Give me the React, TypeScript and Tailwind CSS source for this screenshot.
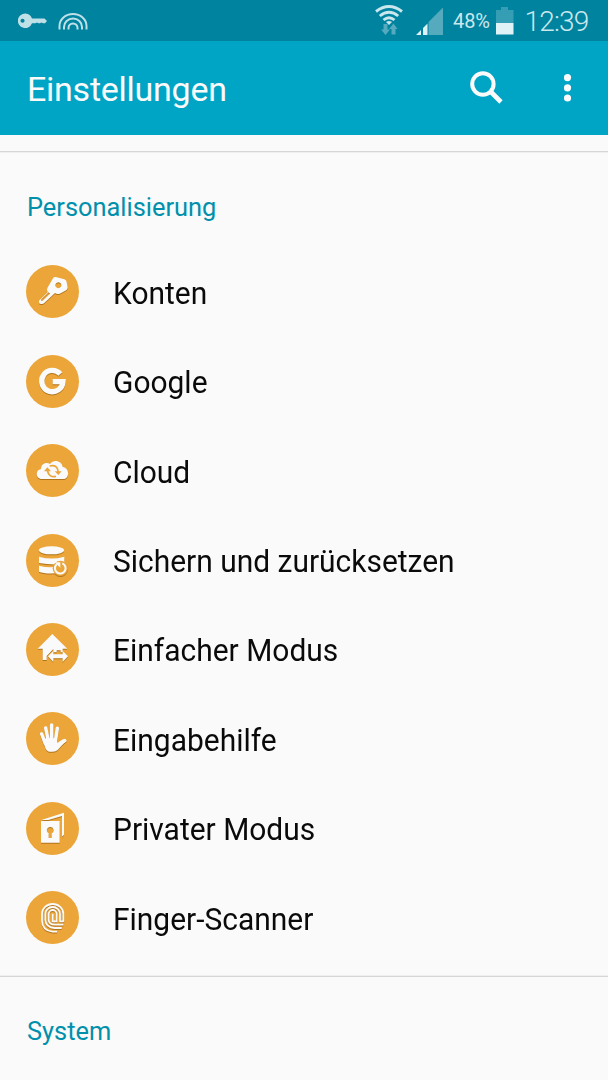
import type { ReactNode } from "react";

const ORANGE = "#eba539";

interface SettingsRowProps {
  label: string;
  icon: ReactNode;
}

function SettingsRow({ label, icon }: SettingsRowProps) {
  return (
    <li className="flex h-[89.45px] items-center pl-[26px]">
      <span className="flex size-[53px] shrink-0 rounded-full bg-[#eba539]">
        <svg viewBox="0 0 159 159" className="size-full drop-shadow-[0.4px_1px_0.4px_rgba(120,70,0,0.5)]" fill="#fafafa">
          {icon}
        </svg>
      </span>
      <span className="ml-[34px] origin-left scale-x-[0.966] pt-[3px] text-[31px] leading-none whitespace-nowrap text-[#0a0a0a]">
        {label}
      </span>
    </li>
  );
}

const keyIcon = (
  <path
    fillRule="evenodd"
    d="M82 38Q85 35 89 36L115 43Q121 45 122 51L125 68Q124 74 118 77L101 86Q93 88 87 84L54 115Q50 118 46 117L41 116Q38 113 39 107L65 82Q61 75 64 69ZM97 52a9 9 0 1 0 .1 0ZM46 103L68 82L72 86L50 107L45 108Z"
  />
);

const googleIcon = (
  <path d="M103 57A32 32 0 1 0 111 80H80" fill="none" stroke="#fafafa" strokeWidth="16" />
);

const cloudIcon = (
  <>
    <path d="M48 105C28 105 27 78 45 75C45 60 60 53 72 60C82 44 108 50 110 69C132 72 131 105 111 105Z" />
    <g fill="none" stroke={ORANGE} strokeWidth="5">
      <path d="M71 66Q94 60 97 84M90 97Q68 102 64 78" />
    </g>
    <path d="M86 82H107L97 93ZM54 82H75L64 70Z" fill={ORANGE} />
  </>
);

const backupIcon = (
  <>
    <ellipse cx="76.5" cy="49" rx="38" ry="12" />
    <path d="M39 68Q76 79 115 68V90Q76 94 39 87ZM39 95Q62 101 87 99V118Q55 120 39 113Z" />
    <circle cx="103" cy="103" r="23" fill={ORANGE} />
    <path d="M109 88A16 16 0 1 1 92 91" fill="none" stroke="#fafafa" strokeWidth="6" />
    <path d="M86 85H103V101Z" />
  </>
);

const easyModeIcon = (
  <>
    <path d="M79 33L124 77H110V88H104V82H92V88H82V78L62 99V111H50V77H35Z" />
    <path d="M66 100L82 84V94H110V84L126 100L110 117V106H82V117Z" />
  </>
);

const handIcon = (
  <>
    <g fill="none" stroke="#fafafa" strokeWidth="10.5" strokeLinecap="round">
      <path d="M47 66L58 95M59 48L67 87M77 39V86M94 49L88 88" />
      <path d="M116 86L91 104" />
    </g>
    <path d="M52 82Q72 75 92 81L94 93L111 82L120 86L95 114Q90 119 80 119H70Q61 118 57 105Z" />
  </>
);

const privateIcon = (
  <>
    <path d="M46 54L114 32V98L108 104V42L67 54Z" />
    <path fillRule="evenodd" d="M45 57H101V122H45ZM72 75A10 10 0 0 0 68 94V108H77V94A10 10 0 0 0 72 75Z" />
  </>
);

const fingerprintIcon = (
  <g fill="none" stroke="#fafafa" strokeWidth="5.4">
    <path d="M93 122H80Q49 118 48 89V68A32 29 0 0 1 112 68V92" />
    <path d="M107 111H86Q60 110 58 87V69A22 21 0 0 1 102 69V91H113" />
    <path d="M112 101H87Q68 100 68 86V70A12 13 0 0 1 92 70V91H84" />
    <path d="M80 68V91H86" />
  </g>
);

const rows: SettingsRowProps[] = [
  { label: "Konten", icon: keyIcon },
  { label: "Google", icon: googleIcon },
  { label: "Cloud", icon: cloudIcon },
  { label: "Sichern und zurücksetzen", icon: backupIcon },
  { label: "Einfacher Modus", icon: easyModeIcon },
  { label: "Eingabehilfe", icon: handIcon },
  { label: "Privater Modus", icon: privateIcon },
  { label: "Finger-Scanner", icon: fingerprintIcon },
];

function StatusBar() {
  return (
    <div className="flex h-[41px] items-center bg-[#00839f] pl-[18px] text-[#cbe8ee]">
      <svg width="30" height="16" viewBox="0 0 30 16" fill="#bfe0e7">
        <path fillRule="evenodd" d="M7.500 0.500A7.300 7.300 0 0 1 14 5.500H26.500L29 8L27 10.300H25L23.500 9.600L22 10.300H20.500L19 9.600L17.500 10.300H14A7.300 7.300 0 1 1 7.500 .5ZM4.500 5.800A2 2 0 1 0 4.600 5.800Z" />
      </svg>
      <svg className="ml-[10px]" width="30" height="18" viewBox="0 0 30 18" fill="none" stroke="#bfe0e7" strokeWidth="2">
        <path d="M1.500 17.500V14A13.500 12 0 0 1 28.500 14V17.500M6 17.500V15A9 8.500 0 0 1 24 15V17.500M10.500 17.500V16A4.500 4.500 0 0 1 19.500 16V17.500" />
      </svg>
      <svg className="ml-[286px]" width="30" height="31" viewBox="-1 0 30 31">
        <g fill="none" stroke="#c9e7ed" strokeWidth="2.900">
          <path d="M1 6.500Q14-3.500 27 6.500M4.800 11Q14 3.500 23.200 11M8.500 15Q14 10.500 19.500 15" />
        </g>
        <path d="M11 17Q14 14.800 17 17L14 20Z" fill="#c9e7ed" />
        <path d="M8.500 19H12.500V24.500H15L10.500 30L6 24.500H8.500ZM16.500 29.500V24H14L18.500 18.500L22.500 24H20.500V29.500Z" fill="#55aabd" />
      </svg>
      <svg className="ml-[12px]" width="28" height="28" viewBox="0 0 28 28">
        <path d="M0 28L5 23V28ZM7 28V21L11.500 16.500V28Z" fill="#e0f2f6" />
        <path d="M12.500 28V15L27 0.500V28Z" fill="#55aabd" />
      </svg>
      <span className="ml-[9px] w-[38px] pt-px text-[20px] leading-none tracking-[-0.1px]">48%</span>
      <svg className="ml-[4.5px]" width="18" height="28" viewBox="0 0 18 28">
        <path d="M0 3H5V0H12V3H17.500V16H0Z" fill="#359eb5" />
        <path d="M0 16H17.500V27.500H0Z" fill="#e0f2f6" />
      </svg>
      <span className="ml-[11px] pt-[3px] text-[28px] leading-none font-light tracking-[-0.8px]">12:39</span>
    </div>
  );
}

function ActionBar() {
  return (
    <header className="flex h-[94px] items-center bg-[#00a5c6] pl-[27px] text-[#fafafa]">
      <h1 className="w-[443px] pt-[2px] text-[34px] leading-none tracking-[-0.25px]">Einstellungen</h1>
      <svg width="34" height="34" viewBox="0 0 34 34" fill="none" stroke="#fafafa">
        <circle cx="12.900" cy="13" r="10.700" strokeWidth="4" />
        <path d="M20.500 20.500L31 31" strokeWidth="4.600" />
      </svg>
      <svg className="ml-[60px]" width="8" height="28" viewBox="0 0 8 28" fill="#fafafa">
        <circle cx="3.500" cy="3.600" r="3.600" />
        <circle cx="3.500" cy="13.800" r="3.600" />
        <circle cx="3.500" cy="24" r="3.600" />
      </svg>
    </header>
  );
}

function SectionTitle({ title }: { title: string }) {
  return <h2 className="h-[30px] pl-[27px] text-[25.4px] leading-[28px] text-[#0090ac]">{title}</h2>;
}

export default function App() {
  return (
    <div className="h-[1080px] w-[608px] overflow-hidden bg-[#fafafa] font-[Roboto,sans-serif]">
      <StatusBar />
      <ActionBar />
      <main className="pt-[16px]">
        <section className="h-[824px]">
          <div className="h-[2px] border-t border-[#d6d6d6] bg-[#efefef]" />
          <div className="pt-[40px]">
            <SectionTitle title="Personalisierung" />
          </div>
          <ul className="pt-[24px]">
            {rows.map((row) => (
              <SettingsRow key={row.label} label={row.label} icon={row.icon} />
            ))}
          </ul>
        </section>
        <section>
          <div className="h-[2px] border-b border-[#d6d6d6] bg-[#efefef]" />
          <div className="pt-[40px]">
            <SectionTitle title="System" />
          </div>
        </section>
      </main>
    </div>
  );
}
